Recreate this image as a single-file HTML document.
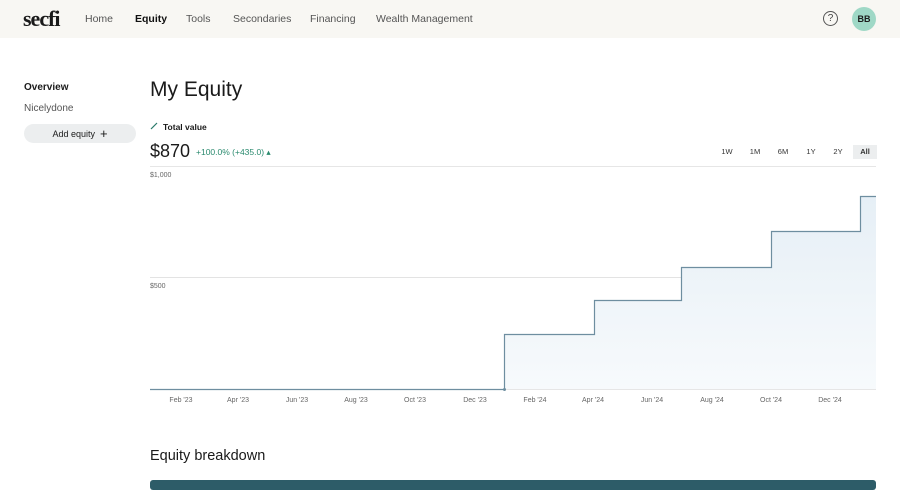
<!DOCTYPE html>
<html><head><meta charset="utf-8"><style>
*{margin:0;padding:0;box-sizing:border-box}
body{width:900px;height:484px;overflow:hidden;background:#fff;font-family:"Liberation Sans",sans-serif;color:#1a1a1a;position:relative}
.hdr{position:absolute;left:0;top:0;width:900px;height:38px;background:#f8f7f3}
.logo{position:absolute;left:23px;top:6px;font-family:"Liberation Serif",serif;font-weight:bold;font-size:22px;letter-spacing:-1px}
.nav{position:absolute;top:13px;font-size:10.5px;color:#555}
.help{position:absolute;left:823px;top:11px;width:15px;height:15px;border:1.2px solid #555;border-radius:50%;font-size:10px;text-align:center;line-height:13px;color:#444}
.av{position:absolute;left:852px;top:7px;width:24px;height:24px;border-radius:50%;background:#9fd8c6;font-size:9px;font-weight:bold;text-align:center;line-height:24px}
.t{position:absolute;white-space:nowrap}
.btn{position:absolute;left:24px;top:124px;width:112px;height:19px;border-radius:10px;background:#eceeef;font-size:9px;text-align:center;line-height:19px}
.rng{position:absolute;top:145px;width:24px;height:14px;font-size:7.5px;text-align:center;line-height:14px;color:#333}
.ax{font-size:7px;fill:#666;font-family:"Liberation Sans",sans-serif}
</style></head><body>
<div class="hdr">
<div class="logo">secfi</div>
<div class="nav" style="left:85px">Home</div>
<div class="nav" style="left:135px;color:#111;font-weight:bold">Equity</div>
<div class="nav" style="left:186px">Tools</div>
<div class="nav" style="left:233px">Secondaries</div>
<div class="nav" style="left:310px">Financing</div>
<div class="nav" style="left:376px">Wealth Management</div>
<div class="help">?</div>
<div class="av">BB</div>
</div>
<div class="t" style="left:24px;top:82px;font-size:10px;font-weight:bold">Overview</div>
<div class="t" style="left:24px;top:103px;font-size:10px;color:#555">Nicelydone</div>
<div class="btn">Add equity &nbsp;<span style="font-size:13px;vertical-align:-1px">+</span></div>
<div class="t" style="left:150px;top:78px;font-size:21px">My Equity</div>
<svg style="position:absolute;left:150px;top:122px" width="8" height="8"><path d="M1 7L7 1" stroke="#2a7a6a" stroke-width="1.2"/></svg>
<div class="t" style="left:163px;top:122px;font-size:8.5px;font-weight:bold">Total value</div>
<div class="t" style="left:150px;top:141px;font-size:18px">$870</div>
<div class="t" style="left:196px;top:147px;font-size:8.5px;color:#2a8a6e">+100.0% (+435.0) ▴</div>
<div class="rng" style="left:715px">1W</div>
<div class="rng" style="left:743px">1M</div>
<div class="rng" style="left:771px">6M</div>
<div class="rng" style="left:799px">1Y</div>
<div class="rng" style="left:826px">2Y</div>
<div class="rng" style="left:853px;background:#eceeef;font-weight:bold">All</div>
<svg style="position:absolute;left:0;top:0" width="900" height="484">
<defs><linearGradient id="g" x1="0" y1="0" x2="0" y2="1"><stop offset="0" stop-color="#e6eff6"/><stop offset="1" stop-color="#f7fafc"/></linearGradient></defs>
<line x1="150" y1="166.5" x2="876" y2="166.5" stroke="#e6e6e6"/>
<line x1="150" y1="277.5" x2="876" y2="277.5" stroke="#e3e3e3"/>
<path d="M504 389V334H594V300H681V267H771V231H860V196H876V389Z" fill="url(#g)"/>
<line x1="150" y1="389.5" x2="876" y2="389.5" stroke="#e6e6e6"/>
<path d="M150 389.5H504.5V334.5H594.5V300.5H681.5V267.5H771.5V231.5H860.5V196.5H876" fill="none" stroke="#6e8ea0" stroke-width="1.2"/>
<circle cx="504.5" cy="389.5" r="1.5" fill="#6e8ea0"/>
<text class="ax" x="150" y="177">$1,000</text>
<text class="ax" x="150" y="288">$500</text>
<g class="ax" text-anchor="middle">
<text x="181" y="402">Feb '23</text><text x="238" y="402">Apr '23</text><text x="297" y="402">Jun '23</text><text x="356" y="402">Aug '23</text><text x="415" y="402">Oct '23</text><text x="475" y="402">Dec '23</text><text x="535" y="402">Feb '24</text><text x="593" y="402">Apr '24</text><text x="652" y="402">Jun '24</text><text x="712" y="402">Aug '24</text><text x="771" y="402">Oct '24</text><text x="830" y="402">Dec '24</text>
</g>
</svg>
<div class="t" style="left:150px;top:448px;font-size:14.5px">Equity breakdown</div>
<div style="position:absolute;left:150px;top:480px;width:726px;height:10px;background:#2d5c68;border-radius:3px"></div>
</body></html>
